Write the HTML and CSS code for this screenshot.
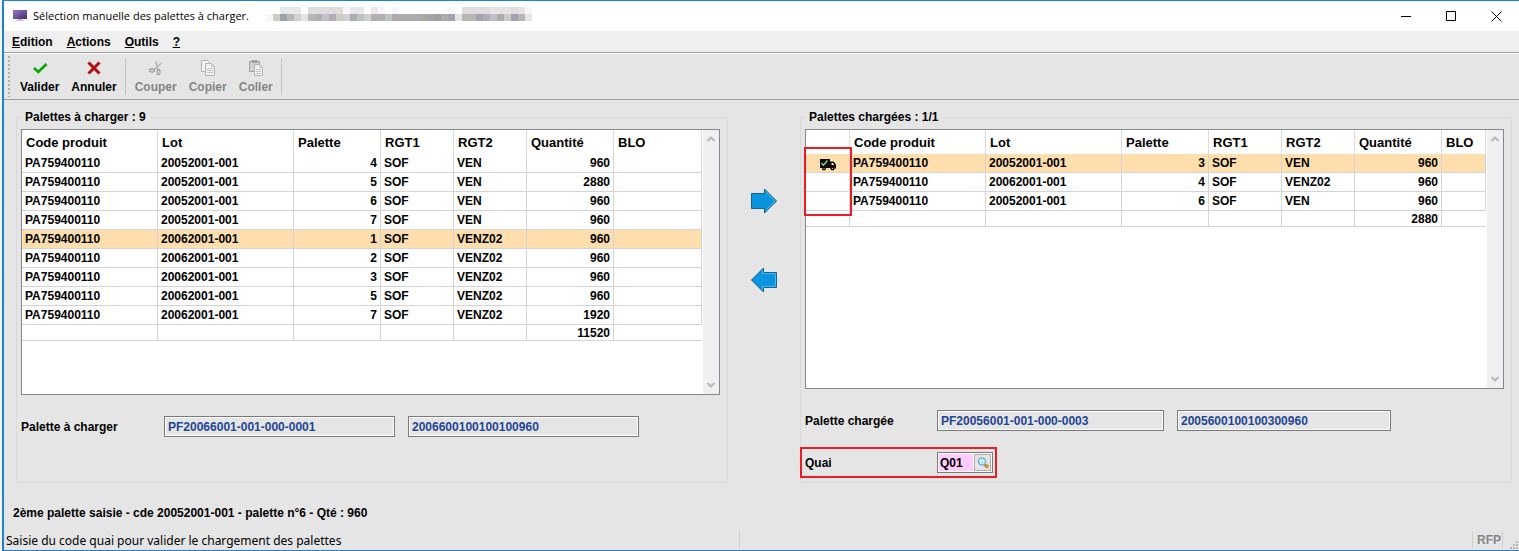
FILE: index.html
```html
<!DOCTYPE html>
<html lang="fr">
<head>
  <meta charset="UTF-8">
  <meta name="viewport" content="width=device-width, initial-scale=1.0">
  <title>Sélection manuelle des palettes à charger.</title>
  <link rel="stylesheet" href="styles.css">
</head>
<body>
  <div class="window">

    <!-- Title bar -->
    <header class="title-bar">
      <svg class="app-icon" width="14" height="12" viewBox="0 0 14 12" aria-hidden="true">
        <defs>
          <linearGradient id="screen" x1="0" y1="0" x2="1" y2="1">
            <stop offset="0" stop-color="#9a7cc4"/>
            <stop offset="1" stop-color="#452a75"/>
          </linearGradient>
        </defs>
        <rect x="0" y="0" width="14" height="9" fill="url(#screen)"/>
        <rect x="5" y="9" width="4" height="1" fill="#b9b9c0"/>
        <rect x="3" y="10" width="8" height="1" fill="#c9c9cf"/>
      </svg>
      <h1>Sélection manuelle des palettes à charger.</h1>
      <svg class="masked" width="266" height="14" viewBox="0 0 38 2" shape-rendering="crispEdges" aria-hidden="true">
        <path fill="#e6e8e9" d="M2 0h3v1h-3zM12 0h2v1h-2zM15 0h1v1h-1z"/>
        <path fill="#dedede" d="M6 0h5v1h-5zM28 0h4v1h-4zM35 0h1v1h-1z"/>
        <path fill="#f6f7f8" d="M11 0h1v1h-1zM16 0h1v1h-1zM18 0h1v1h-1zM26 0h1v1h-1zM37 0h1v1h-1zM0 1h1v1h-1z"/>
        <path fill="#e5e3e3" d="M32 0h3v1h-3zM36 0h1v1h-1zM5 1h1v1h-1zM27 1h1v1h-1zM37 1h1v1h-1z"/>
        <path fill="#d0d1d5" d="M4 1h1v1h-1zM11 1h1v1h-1zM14 1h1v1h-1z"/>
        <path fill="#cfcac2" d="M1 1h1v1h-1zM10 1h1v1h-1zM34 1h1v1h-1z"/>
        <path fill="#99a3ab" d="M2 1h1v1h-1z"/>
        <path fill="#b8b8b3" d="M3 1h1v1h-1zM6 1h1v1h-1zM28 1h2v1h-2zM36 1h1v1h-1z"/>
        <path fill="#b5adb4" d="M7 1h1v1h-1zM9 1h1v1h-1zM15 1h2v1h-2zM31 1h1v1h-1z"/>
        <path fill="#bcc3c8" d="M8 1h1v1h-1zM13 1h1v1h-1zM17 1h1v1h-1zM32 1h1v1h-1z"/>
        <path fill="#adabad" d="M12 1h1v1h-1zM18 1h4v1h-4zM25 1h1v1h-1zM33 1h1v1h-1z"/>
        <path fill="#a9a9a0" d="M22 1h1v1h-1z"/>
        <path fill="#a6a1b0" d="M23 1h1v1h-1zM26 1h1v1h-1zM30 1h1v1h-1zM35 1h1v1h-1z"/>
        <path fill="#a19c9e" d="M24 1h1v1h-1z"/>
      </svg>
      <div class="window-controls">
        <button type="button" aria-label="Réduire">
          <svg width="11" height="11" viewBox="0 0 11 11"><path d="M0 5.5h10" stroke="#000" fill="none"/></svg>
        </button>
        <button type="button" aria-label="Agrandir">
          <svg width="11" height="11" viewBox="0 0 11 11"><path d="M.5 .5h9v9h-9z" stroke="#000" fill="none"/></svg>
        </button>
        <button type="button" aria-label="Fermer">
          <svg width="11" height="11" viewBox="0 0 11 11"><path d="M.5 .5l10 10M10.500 .5l-10 10" stroke="#000" fill="none"/></svg>
        </button>
      </div>
    </header>

    <!-- Menu -->
    <nav class="menu-bar">
      <a href="#edition"><u>E</u>dition</a>
      <a href="#actions"><u>A</u>ctions</a>
      <a href="#outils"><u>O</u>utils</a>
      <a href="#aide"><u>?</u></a>
    </nav>

    <!-- Toolbar -->
    <div class="toolbar">
      <span class="toolbar-grip"></span>
      <div class="tool-group">
        <button type="button" class="tool">
          <svg width="16" height="16" viewBox="0 0 16 16"><path d="M2 8L6.300 12L14.500 4" stroke="#08a808" stroke-width="2.600" fill="none"/></svg>
          Valider
        </button>
        <button type="button" class="tool">
          <svg width="16" height="16" viewBox="0 0 16 16"><path d="M2.500 2.500L13.500 13.500M13.500 2.500L2.500 13.500" stroke="#b80c0c" stroke-width="3" fill="none"/></svg>
          Annuler
        </button>
      </div>
      <div class="tool-group">
        <button type="button" class="tool" disabled>
          <svg width="16" height="16" viewBox="0 0 16 16" fill="none" stroke="#a0a0a0">
            <path d="M8 1l1.500 8M13.500 3L5.500 10" stroke-width="1.500" stroke="#b5b5b5"/>
            <ellipse cx="4" cy="10.500" rx="2.500" ry="1.500" stroke-width="1.300"/>
            <ellipse cx="10.500" cy="12" rx="1.500" ry="2.500" stroke-width="1.300"/>
          </svg>
          Couper
        </button>
        <button type="button" class="tool" disabled>
          <svg width="16" height="16" viewBox="0 0 16 16" fill="#f2f2f2" stroke="#b4b4b4">
            <path d="M1.500 .5h6l2 2v9h-8z"/>
            <path d="M5.500 3.500h6l3 3v9h-9z"/>
            <path d="M11.500 3.500v3h3M7 8.500h6M7 10.500h6M7 12.500h6" fill="none" stroke="#c4c4c4"/>
          </svg>
          Copier
        </button>
        <button type="button" class="tool" disabled>
          <svg width="16" height="16" viewBox="0 0 16 16" fill="#d0d0d0" stroke="#a0a0a0">
            <path d="M1.500 1.500h10v10h-10z"/>
            <path d="M4 .5h5v2h-5z" fill="#a0a0a0"/>
            <path d="M6.500 4.500h5l3 3v8h-8z" fill="#f2f2f2" stroke="#b4b4b4"/>
            <path d="M11.500 4.500v3h3M8 9.500h5M8 11.500h5M8 13.500h5" fill="none" stroke="#c4c4c4"/>
          </svg>
          Coller
        </button>
      </div>
    </div>

    <!-- Pallets lists -->
    <main class="content">
      <fieldset class="panel">
        <legend>Palettes à charger : 9</legend>
        <div class="list-box">
          <div class="list-table">
            <table>
              <colgroup>
                <col class="col-code"><col class="col-lot"><col class="col-palette"><col class="col-rgt"><col class="col-rgt"><col class="col-qty"><col>
              </colgroup>
              <thead>
                <tr><th>Code produit</th><th>Lot</th><th>Palette</th><th>RGT1</th><th>RGT2</th><th>Quantité</th><th>BLO</th></tr>
              </thead>
              <tbody>
                <tr><td>PA759400110</td><td>20052001-001</td><td class="num">4</td><td>SOF</td><td>VEN</td><td class="num">960</td><td></td></tr>
                <tr><td>PA759400110</td><td>20052001-001</td><td class="num">5</td><td>SOF</td><td>VEN</td><td class="num">2880</td><td></td></tr>
                <tr><td>PA759400110</td><td>20052001-001</td><td class="num">6</td><td>SOF</td><td>VEN</td><td class="num">960</td><td></td></tr>
                <tr><td>PA759400110</td><td>20052001-001</td><td class="num">7</td><td>SOF</td><td>VEN</td><td class="num">960</td><td></td></tr>
                <tr class="selected"><td>PA759400110</td><td>20062001-001</td><td class="num">1</td><td>SOF</td><td>VENZ02</td><td class="num">960</td><td></td></tr>
                <tr><td>PA759400110</td><td>20062001-001</td><td class="num">2</td><td>SOF</td><td>VENZ02</td><td class="num">960</td><td></td></tr>
                <tr><td>PA759400110</td><td>20062001-001</td><td class="num">3</td><td>SOF</td><td>VENZ02</td><td class="num">960</td><td></td></tr>
                <tr><td>PA759400110</td><td>20062001-001</td><td class="num">5</td><td>SOF</td><td>VENZ02</td><td class="num">960</td><td></td></tr>
                <tr><td>PA759400110</td><td>20062001-001</td><td class="num">7</td><td>SOF</td><td>VENZ02</td><td class="num">1920</td><td></td></tr>
              </tbody>
              <tfoot>
                <tr><td></td><td></td><td></td><td></td><td></td><td class="num">11520</td><td></td></tr>
              </tfoot>
            </table>
          </div>
          <div class="scroll-bar">
            <button type="button" aria-label="Défiler vers le haut"><svg width="8" height="6" viewBox="0 0 8 6"><path d="M.5 5L4 1.500L7.500 5"/></svg></button>
            <button type="button" aria-label="Défiler vers le bas"><svg width="8" height="6" viewBox="0 0 8 6"><path d="M.5 1L4 4.500L7.500 1"/></svg></button>
          </div>
        </div>
        <div class="fields fields-to-load">
          <div class="field-row">
            <label for="to-load-code">Palette à charger</label>
            <input type="text" id="to-load-code" class="field" value="PF20066001-001-000-0001" readonly>
            <input type="text" class="field" value="2006600100100100960" aria-label="Code barre palette à charger" readonly>
          </div>
        </div>
      </fieldset>

      <div class="transfer">
        <button type="button" aria-label="Charger la palette">
          <svg width="26" height="26" viewBox="0 0 26 26"><path d="M.5 5.500h13v-4.500l12 12l-12 12v-4.500h-13z" fill="#0a94de" stroke="#10658f"/><path d="M14.500 3.500l9.500 9.500l-9.500 9.500" fill="none" stroke="#4db8ee"/></svg>
        </button>
        <button type="button" aria-label="Retirer la palette">
          <svg width="26" height="26" viewBox="0 0 26 26"><path d="M25.500 5.500h-13v-4.500l-12 12l12 12v-4.500h13z" fill="#0a94de" stroke="#10658f"/><path d="M11.500 3.500v3h13v13h-13v3" fill="none" stroke="#4db8ee"/></svg>
        </button>
      </div>

      <fieldset class="panel">
        <legend>Palettes chargées : 1/1</legend>
        <div class="list-box">
          <div class="list-table">
            <table>
              <colgroup>
                <col class="col-state"><col class="col-code"><col class="col-lot"><col class="col-palette"><col class="col-rgt"><col class="col-rgt"><col class="col-qty"><col>
              </colgroup>
              <thead>
                <tr><th></th><th>Code produit</th><th>Lot</th><th>Palette</th><th>RGT1</th><th>RGT2</th><th>Quantité</th><th>BLO</th></tr>
              </thead>
              <tbody>
                <tr class="selected">
                  <td class="state">
                    <svg width="16" height="12" viewBox="0 0 16 12" role="img" aria-label="Chargée">
                      <path d="M0 0h10v9h-10z" fill="#0a0a0a"/>
                      <path d="M10 2.500h3.500l2.500 3v4h-6z" fill="#0a0a0a"/>
                      <path d="M11.500 4h1.500l1.300 2h-2.800z" fill="#ffdead"/>
                      <circle cx="4" cy="9.500" r="1.900" fill="#0a0a0a"/>
                      <circle cx="12.500" cy="9.500" r="1.900" fill="#0a0a0a"/>
                      <circle cx="4" cy="9.500" r=".6" fill="#ffdead"/>
                      <circle cx="12.500" cy="9.500" r=".6" fill="#ffdead"/>
                      <path d="M1.500 4l2 2.200L7.500 1.500" fill="none" stroke="#7ee08a" stroke-width="1.300"/>
                    </svg>
                  </td>
                  <td>PA759400110</td><td>20052001-001</td><td class="num">3</td><td>SOF</td><td>VEN</td><td class="num">960</td><td></td>
                </tr>
                <tr><td></td><td>PA759400110</td><td>20062001-001</td><td class="num">4</td><td>SOF</td><td>VENZ02</td><td class="num">960</td><td></td></tr>
                <tr><td></td><td>PA759400110</td><td>20052001-001</td><td class="num">6</td><td>SOF</td><td>VEN</td><td class="num">960</td><td></td></tr>
              </tbody>
              <tfoot>
                <tr><td></td><td></td><td></td><td></td><td></td><td></td><td class="num">2880</td><td></td></tr>
              </tfoot>
            </table>
          </div>
          <div class="scroll-bar">
            <button type="button" aria-label="Défiler vers le haut"><svg width="8" height="6" viewBox="0 0 8 6"><path d="M.5 5L4 1.500L7.500 5"/></svg></button>
            <button type="button" aria-label="Défiler vers le bas"><svg width="8" height="6" viewBox="0 0 8 6"><path d="M.5 1L4 4.500L7.500 1"/></svg></button>
          </div>
          <span class="highlight highlight-state"></span>
        </div>
        <div class="fields fields-loaded">
          <div class="field-row">
            <label for="loaded-code">Palette chargée</label>
            <input type="text" id="loaded-code" class="field" value="PF20056001-001-000-0003" readonly>
            <input type="text" class="field field-short" value="2005600100100300960" aria-label="Code barre palette chargée" readonly>
          </div>
          <div class="field-row">
            <label for="dock">Quai</label>
            <div class="lookup">
              <input type="text" id="dock" value="Q01">
              <button type="button" aria-label="Rechercher un quai">
                <svg width="12" height="12" viewBox="0 0 12 12">
                  <path d="M7.500 7.500l1.500 1.500" stroke="#8a8a8a" stroke-width="2"/>
                  <circle cx="5" cy="4.500" r="3.700" fill="#b9ebfa" stroke="#6d93b5"/>
                  <path d="M3 4a2 2 0 0 1 2-1.500" stroke="#fff" fill="none"/>
                  <circle cx="9.800" cy="9.300" r="1.700" fill="#e8a020" stroke="#a87418" stroke-width=".6"/>
                </svg>
              </button>
            </div>
            <span class="highlight highlight-dock"></span>
          </div>
        </div>
      </fieldset>
    </main>

    <p class="message">2ème palette saisie - cde 20052001-001 - palette n°6 - Qté : 960</p>

    <!-- Status bar -->
    <footer class="status-bar">
      <span class="status-text">Saisie du code quai pour valider le chargement des palettes</span>
      <span class="status-empty"></span>
      <span class="status-mode">RFP</span>
      <svg class="resize-grip" width="9" height="9" viewBox="0 0 9 9" fill="#b4b4b4" aria-hidden="true">
        <path d="M6 0h2v2h-2zM3 3h2v2h-2zM6 3h2v2h-2zM0 6h2v2h-2zM3 6h2v2h-2zM6 6h2v2h-2z"/>
      </svg>
    </footer>
  </div>
</body>
</html>
```
FILE: styles.css
```css
/* Base styles */
* {
  margin: 0;
  padding: 0;
  box-sizing: border-box;
}

body {
  font-family: "Liberation Sans", Arial, sans-serif;
  font-size: 12px;
  font-weight: bold;
  line-height: 14px;
  color: #000;
  background-color: #f4f4f4;
  padding-left: 2px;
}

button,
input {
  font: inherit;
  color: inherit;
}

button {
  background: none;
  border: none;
}

svg {
  display: block;
}

.window {
  min-height: 100vh;
  display: flex;
  flex-direction: column;
  background-color: #e5e5e5;
  border: 1px solid #1c82d4;
  border-left-width: 2px;
  border-right: none;
}

/* Title bar */
.title-bar {
  display: flex;
  align-items: center;
  height: 30px;
  padding-left: 9px;
  background-color: #fff;
}

.title-bar h1 {
  margin-left: 6px;
  font-family: "Open Sans", "Noto Sans", sans-serif;
  font-size: 11px;
  font-weight: normal;
  white-space: nowrap;
}

.masked {
  margin: 0 0 4px 17px;
}

.window-controls {
  display: flex;
  align-self: stretch;
  margin-left: auto;
}

.window-controls button {
  width: 45px;
  display: flex;
  align-items: center;
  justify-content: center;
}

/* Menu */
.menu-bar {
  display: flex;
  align-items: center;
  height: 22px;
  background-color: #efefef;
  border-bottom: 1px solid #9f9f9f;
}

.menu-bar a {
  padding: 0 6px 0 8px;
  color: #000;
  text-decoration: none;
}

/* Toolbar */
.toolbar {
  display: flex;
  height: 47px;
  padding: 2px 4px;
  border-top: 1px solid #fff;
  border-bottom: 1px solid #9f9f9f;
}

.toolbar-grip {
  width: 2px;
  margin-right: 4px;
  background: repeating-linear-gradient(#b0b0b0 0 2px, #e5e5e5 2px 4px);
}

.tool-group {
  display: flex;
  margin: 2px 0;
  padding-right: 2px;
  border-right: 1px solid #c4c4c4;
}

.tool-group + .tool-group {
  padding-left: 3px;
}

.tool {
  display: flex;
  flex-direction: column;
  align-items: center;
  gap: 4px;
  padding: 2px 6px 0;
}

.tool:disabled {
  color: #858585;
}

/* Panels */
.content {
  flex: 1;
  display: grid;
  grid-template-columns: minmax(0, 1fr) 72px minmax(0, 1fr);
  padding: 10px 7px 0 12px;
}

.panel {
  display: flex;
  flex-direction: column;
  min-width: 0;
  padding: 5px 7px 0 4px;
  border: 1px solid #dadada;
}

.panel legend {
  padding: 0 4px;
}

.list-box {
  position: relative;
  flex: 1;
  display: flex;
  background-color: #fff;
  border: 1px solid #828790;
}

.list-table {
  flex: 1;
  min-width: 0;
  padding-right: 1px;
}

table {
  width: 100%;
  table-layout: fixed;
  border-collapse: separate;
  border-spacing: 0;
}

.col-state {
  width: 44px;
}

.col-code,
.col-lot {
  width: 136px;
}

.col-palette,
.col-qty {
  width: 87px;
}

.col-rgt {
  width: 73px;
}

th {
  height: 24px;
  padding: 2px 0 0 4px;
  font-size: 13px;
  text-align: left;
  border-right: 1px solid #dcdcdc;
}

td {
  height: 19px;
  padding: 0 3px;
  white-space: nowrap;
  border-right: 1px solid #d4d4d4;
  border-bottom: 1px solid #d4d4d4;
}

tfoot td {
  height: 16px;
}

tfoot td:last-child {
  border-right: none;
}

.num {
  text-align: right;
}

.selected {
  background-color: #ffdead;
}

.state svg {
  margin: 3px auto 0;
}

/* Scroll bar */
.scroll-bar {
  width: 16px;
  display: flex;
  flex-direction: column;
  justify-content: space-between;
  background-color: #f0f0f0;
}

.scroll-bar button {
  height: 18px;
  display: flex;
  align-items: center;
  justify-content: center;
}

.scroll-bar path {
  fill: none;
  stroke: #b8b8b8;
  stroke-width: 2;
}

/* Transfer buttons */
.transfer {
  display: flex;
  flex-direction: column;
  align-items: center;
  gap: 53px;
  padding-top: 78px;
}

/* Fields */
.fields {
  display: flex;
  flex-direction: column;
  gap: 21px;
  padding-top: 21px;
}

.fields-to-load {
  padding-bottom: 45px;
}

.fields-loaded {
  padding-bottom: 9px;
}

.field-row {
  position: relative;
  display: flex;
  align-items: center;
  height: 21px;
}

.fields-to-load label {
  width: 143px;
}

.fields-loaded label {
  width: 132px;
}

.field {
  flex: 0 1 231px;
  min-width: 0;
  height: 21px;
  padding: 0 3px;
  color: #1f4596;
  background-color: #e5e5e5;
  border: 1px solid #7a7a7a;
  box-shadow: inset 0 0 0 1px #fff;
}

.field + .field {
  margin-left: 13px;
}

.fields-loaded .field {
  flex-basis: 227px;
}

.fields-loaded .field-short {
  flex-basis: 214px;
}

.lookup {
  display: flex;
  width: 56px;
  height: 21px;
  padding: 1px;
  background-color: #fff;
  border: 1px solid #7a7a7a;
}

.lookup input {
  flex: 1;
  min-width: 0;
  margin-right: 1px;
  padding-left: 1px;
  background-color: #fcf;
  border: none;
}

.lookup button {
  width: 17px;
  display: flex;
  align-items: center;
  justify-content: center;
  background-color: #e5e5e5;
  border: 1px solid #adadad;
}

/* Red frames drawn over the form */
.highlight {
  position: absolute;
  border: 2px solid #ed1c24;
  pointer-events: none;
}

.highlight-state {
  top: 17px;
  left: -2px;
  width: 48px;
  height: 69px;
}

.highlight-dock {
  top: -5px;
  left: -5px;
  width: 197px;
  height: 31px;
}

/* Message and status bar */
.message {
  padding: 23px 9px 9px;
}

.status-bar {
  display: flex;
  align-items: center;
  height: 21px;
}

.status-text,
.status-empty {
  flex: 1 1 0;
  height: 17px;
  line-height: 19px;
  border-right: 1px solid #d0d0d0;
}

.status-text {
  padding-left: 2px;
  font-family: "Noto Sans", sans-serif;
  font-weight: normal;
  white-space: nowrap;
}

.status-mode {
  height: 17px;
  padding: 0 1px 0 4px;
  line-height: 19px;
  color: #858585;
  border-right: 1px solid #d0d0d0;
}

.resize-grip {
  align-self: flex-end;
  margin-left: 7px;
}
```
